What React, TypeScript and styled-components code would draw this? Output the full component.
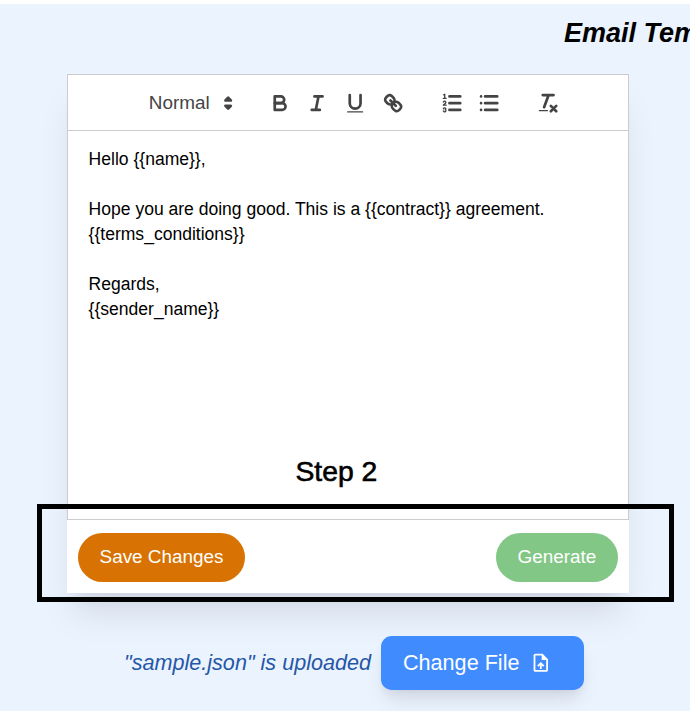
import React from "react";
import styled, { createGlobalStyle, css } from "styled-components";

const GlobalStyle = createGlobalStyle`
  *, *::before, *::after { box-sizing: border-box; }
  html, body { margin: 0; padding: 0; overflow: hidden; background: #fff; }
  body { font-family: "Liberation Sans", Arial, sans-serif; }
`;

const Page = styled.main`
  position: relative;
  width: 690px;
  height: 711px;
  border-top: 4px solid #fff;
  background: #ebf3ff;
  overflow: hidden;
`;

const Title = styled.h1`
  margin: 0 0 0 564px;
  padding-top: 14px;
  height: 70px;
  font-size: 27px;
  line-height: 31px;
  font-weight: 700;
  font-style: italic;
  white-space: nowrap;
  color: #000;
`;

const Card = styled.section`
  width: 562px;
  height: 519px;
  margin-left: 67px;
  background: #fff;
  box-shadow: 0 27px 33.75px -6.75px rgba(0, 0, 0, 0.1), 0 13.5px 13.5px -6.75px rgba(0, 0, 0, 0.04);
`;

const Toolbar = styled.div`
  display: flex;
  align-items: center;
  gap: 20.25px;
  height: 57px;
  padding: 1px 0 0 70px;
  border: 1px solid #ccc;
`;

const Picker = styled.div`
  display: flex;
  align-items: center;
  justify-content: space-between;
  width: 102.5px;
  padding-left: 10.8px;
  font-size: 18.9px;
  line-height: 32px;
  font-weight: 500;
  color: #444;
`;

const PickerLabel = styled.span`
  margin-top: -1px;
`;

const ToolGroup = styled.div`
  display: flex;
`;

const ToolButton = styled.button`
  display: flex;
  width: 37.95px;
  height: 32.4px;
  padding: 4.05px 6.75px;
  border: 0;
  background: none;
`;

const ToolIcon = styled.svg`
  display: block;
  flex: none;
  width: 24.3px;
  height: 24.3px;
  fill: none;
  stroke: #444;
  stroke-width: 2;
  stroke-linecap: round;
  stroke-linejoin: round;

  .fill { fill: #444; stroke: none; }
  .solid { fill: #444; }
  .thin { stroke-width: 1; }
`;

const Editor = styled.div`
  height: 389px;
  padding: 16.4px 20.6px;
  border: 1px solid #ccc;
  border-top: 0;
  font-size: 17.55px;
  line-height: 24.9px;
  color: #000;
`;

const Line = styled.p`
  margin: 0;
  min-height: 24.9px;
`;

const Actions = styled.div`
  display: flex;
  justify-content: space-between;
  padding: 13px 11px 0;
`;

const PillButton = styled.button<{ $tone: "save" | "generate" }>`
  height: 49px;
  padding: 0 0 1px;
  border: 0;
  border-radius: 25px;
  font: 18.9px "Liberation Sans", Arial, sans-serif;
  color: #fff;
  ${({ $tone }) =>
    $tone === "save"
      ? css`width: 167px; background: #d87203;`
      : css`width: 122px; background: #82c785;`}
`;

const UploadRow = styled.div`
  display: flex;
  align-items: center;
  margin: 43px 0 0 124px;
  font-size: 21.6px;
`;

const UploadStatus = styled.span`
  width: 257px;
  white-space: nowrap;
  font-style: italic;
  color: #2557a7;
`;

const FileButton = styled.button`
  display: flex;
  align-items: center;
  gap: 11px;
  width: 203px;
  height: 54px;
  padding: 0 22px;
  border: 0;
  border-radius: 10.8px;
  background: #408cff;
  box-shadow: 0 13.5px 20.25px -4px rgba(0, 0, 0, 0.1), 0 5.4px 8.1px -2.7px rgba(0, 0, 0, 0.05);
  font: 21.6px "Liberation Sans", Arial, sans-serif;
  white-space: nowrap;
  color: #fff;
`;

const FileIcon = styled.svg`
  width: 21.6px;
  height: 21.6px;
  flex: none;
  fill: currentColor;
`;

const StepLabel = styled.div`
  position: absolute;
  top: 451px;
  left: 295.5px;
  font-size: 28.3px;
  line-height: 33px;
  color: #000;
  -webkit-text-stroke: 0.6px #000;
`;

const StepFrame = styled.div`
  position: absolute;
  top: 500px;
  left: 37px;
  width: 637px;
  height: 98px;
  border: 5px solid #000;
`;

const Icon = ({ children }: { children: React.ReactNode }) => (
  <ToolIcon viewBox="0 0 18 18" aria-hidden="true">{children}</ToolIcon>
);

const Tool = ({ label, children }: { label: string; children: React.ReactNode }) => (
  <ToolButton type="button" aria-label={label}>
    <Icon>{children}</Icon>
  </ToolButton>
);

const message = [
  "Hello {{name}},",
  "",
  "Hope you are doing good. This is a {{contract}} agreement.",
  "{{terms_conditions}}",
  "",
  "Regards,",
  "{{sender_name}}",
];

export default function App() {
  return (
    <>
      <GlobalStyle />
      <Page>
        <Title>Email Template</Title>
        <Card>
          <Toolbar>
            <Picker>
              <PickerLabel>Normal</PickerLabel>
              <Icon>
                <polygon className="solid" points="7 11 9 13 11 11 7 11" />
                <polygon className="solid" points="7 7 9 5 11 7 7 7" />
              </Icon>
            </Picker>
            <ToolGroup>
              <Tool label="Bold">
                <path d="M5,4H9.5A2.5,2.5,0,0,1,12,6.5v0A2.5,2.5,0,0,1,9.5,9H5V4Z" />
                <path d="M5,9h5.5A2.5,2.5,0,0,1,13,11.5v0A2.5,2.5,0,0,1,10.5,14H5V9Z" />
              </Tool>
              <Tool label="Italic">
                <path d="M7,4H13M5,14H11M8,14L10,4" />
              </Tool>
              <Tool label="Underline">
                <path d="M5,3V9a4.012,4.012,0,0,0,4,4H9a4.012,4.012,0,0,0,4-4V3" />
                <rect className="fill" x="3" y="15" width="12" height="1" rx="0.5" />
              </Tool>
              <Tool label="Link">
                <path d="M7,7L11,11" />
                <path d="M8.9,4.577a3.476,3.476,0,0,1,.36,4.679A3.476,3.476,0,0,1,4.577,8.9C3.185,7.5,2.035,6.4,4.217,4.217S7.5,3.185,8.9,4.577Z" />
                <path d="M13.423,9.1a3.476,3.476,0,0,0-4.679-.36,3.476,3.476,0,0,0,.36,4.679c1.392,1.392,2.5,2.542,4.679.36S14.815,10.5,13.423,9.1Z" />
              </Tool>
            </ToolGroup>
            <ToolGroup>
              <Tool label="Ordered list">
                <path d="M7,4H15M7,9H15M7,14H15" />
                <path className="thin" d="M2.5,5.5H4.5" />
                <path className="fill" d="M3.5,6A0.5,0.5,0,0,1,3,5.5V3.085l-0.276.138A0.5,0.5,0,0,1,2.053,3c-0.124-.247-0.023-0.324.224-0.447l1-.5A0.5,0.5,0,0,1,4,2.5v3A0.5,0.5,0,0,1,3.5,6Z" />
                <path className="thin" d="M4.5,10.5h-2c0-.234,1.85-1.076,1.85-2.234A0.959,0.959,0,0,0,2.5,8.156" />
                <path className="thin" d="M2.5,14.846a0.959,0.959,0,0,0,1.85-.109A0.7,0.7,0,0,0,3.75,14a0.688,0.688,0,0,0,.6-0.736,0.959,0.959,0,0,0-1.85-.109" />
              </Tool>
              <Tool label="Bulleted list">
                <path d="M6,4H15M6,9H15M6,14H15M3,4H3M3,9H3M3,14H3" />
              </Tool>
            </ToolGroup>
            <ToolGroup>
              <Tool label="Clear formatting">
                <path d="M5,3H13M6,12L9.35,3M11,11L15,15M15,11L11,15" />
                <rect className="fill" x="2" y="14" width="7" height="1" rx="0.5" />
              </Tool>
            </ToolGroup>
          </Toolbar>
          <Editor>
            {message.map((text, i) => (
              <Line key={i}>{text}</Line>
            ))}
          </Editor>
          <Actions>
            <PillButton $tone="save">Save Changes</PillButton>
            <PillButton $tone="generate">Generate</PillButton>
          </Actions>
        </Card>
        <UploadRow>
          <UploadStatus>"sample.json" is uploaded</UploadStatus>
          <FileButton>
            Change File
            <FileIcon viewBox="0 0 24 24" aria-hidden="true">
              <path d="M14 2H6c-1.1 0-1.99.9-1.99 2L4 20c0 1.100.890 2 1.990 2H18c1.100 0 2-.900 2-2V8l-6-6zm4 18H6V4h7v5h5v11zM8 15.010l1.410 1.410L11 14.840V19h2v-4.160l1.590 1.590L16 15.010 12.010 11 8 15.010z" />
            </FileIcon>
          </FileButton>
        </UploadRow>
        <StepLabel>Step 2</StepLabel>
        <StepFrame />
      </Page>
    </>
  );
}
